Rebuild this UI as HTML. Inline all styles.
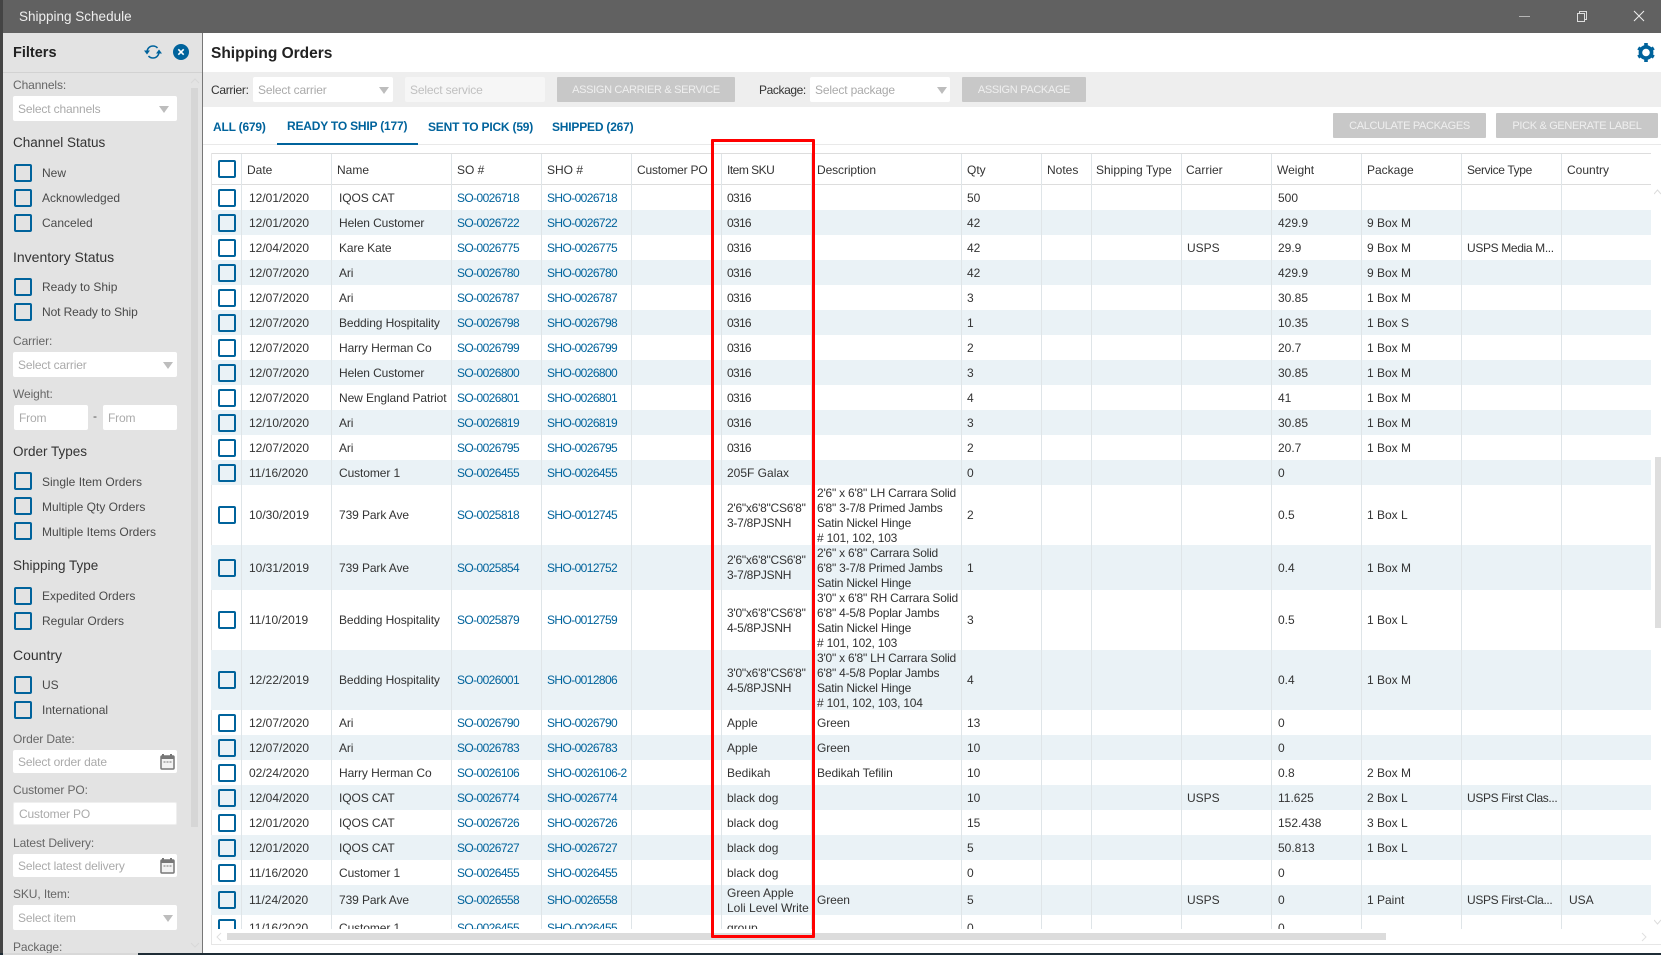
<!DOCTYPE html>
<html><head><meta charset="utf-8"><title>Shipping Schedule</title>
<style>
*{box-sizing:border-box;margin:0;padding:0}
html,body{width:1661px;height:955px;overflow:hidden;background:#fff}
body{position:relative;font-family:"Liberation Sans",sans-serif;font-size:12px;color:#333}
.a{position:absolute;white-space:nowrap}
#title{left:0;top:0;width:1661px;height:33px;background:#616161}
#side{left:0;top:33px;width:203px;height:920px;background:#e3e3e3;border-right:1px solid #777;overflow:hidden}
#edge{left:0;top:0;width:3px;height:953px;background:#444}
.lbl{left:13px;color:#666;font-size:12px;height:16px;line-height:16px;letter-spacing:-.1px}
.hd{left:13px;color:#333;font-size:13.5px;height:18px;line-height:18px}
.ck{left:14px;width:18px;height:18px;border:2px solid #00639c;border-radius:2px}
.cl{left:42px;color:#4a4a4a;font-size:12px;height:18px;line-height:18px}
.inp{background:#fff;border-radius:2px;color:#aaa;font-size:12px;padding-left:5px;display:flex;align-items:center;white-space:nowrap;letter-spacing:-.15px}
.arr{width:0;height:0;border-left:5px solid transparent;border-right:5px solid transparent;border-top:7px solid #bdbdbd}
.btn{background:#c8c8c8;color:#efefef;font-size:11px;letter-spacing:-.33px;border-radius:1px;display:flex;align-items:center;justify-content:center;white-space:nowrap}
.tab{color:#00639c;font-weight:bold;font-size:12px;height:18px;line-height:18px;letter-spacing:-.2px}
.th{top:161px;height:18px;line-height:18px;color:#333;font-size:12px}
.vl{top:154px;width:1px;height:775px;background:#dfe5e8}
#t{left:211px;top:185px;width:1440px;height:744px;overflow:hidden}
.r{position:relative;height:25px}
.r:nth-child(even){background:#eaf2f6}
.r span{position:absolute;top:0;height:100%;padding-top:1px;display:flex;align-items:center;white-space:nowrap;line-height:15px;color:#333;font-size:12px}
.r u{position:absolute;left:7px;top:50%;margin-top:-9px;width:18px;height:18px;border:2px solid #00639c;border-radius:2px;text-decoration:none}
.r .d{left:38px}
.r .n{left:128px;letter-spacing:-.1px}
.r .o{left:246px;color:#00639c;letter-spacing:-.6px}
.r .h{left:336px;color:#00639c;letter-spacing:-.6px}
.r .k{left:516px}
.r:nth-child(-n+11) .k{letter-spacing:-.7px}
.h60 .k,.h45 .k{letter-spacing:-.25px}
.r .e{left:606px;letter-spacing:-.1px}
.h60 .e,.h45 .e{letter-spacing:-.22px}
.r .q{left:756px}
.r .c{left:976px}
.r .w{left:1067px}
.r .p{left:1156px}
.r .v{left:1256px;letter-spacing:-.35px}
.r .y{left:1358px}
.h60{height:60px}.h45{height:45px}.h30{height:30px}
</style></head><body>
<div class="a" id="title"></div>
<div class="a" style="left:19px;top:8px;height:18px;line-height:18px;font-size:13.500px;color:#eee">Shipping Schedule</div>
<div class="a" style="left:1519px;top:16px;width:11px;height:1px;background:#b5b5b5"></div>
<svg class="a" style="left:1574px;top:9px" width="16" height="14" viewBox="0 0 16 14"><path d="M3.500 4.500h7v8h-7zM5.500 4.500V2.500h7v8h-2" fill="none" stroke="#ddd" stroke-width="1"/></svg>
<svg class="a" style="left:1633px;top:10px" width="12" height="12" viewBox="0 0 12 12"><path d="M1 1l10 10M11 1L1 11" stroke="#eee" stroke-width="1" fill="none"/></svg>

<div class="a" id="side"></div>
<div class="a" id="edge"></div>
<div class="a" style="left:3px;top:72px;width:199px;height:1px;background:#d2d2d2"></div>
<div class="a" style="left:13px;top:44px;height:18px;line-height:18px;font-size:14.500px;font-weight:bold;color:#222">Filters</div>
<svg class="a" style="left:143px;top:43px" width="20" height="18" viewBox="0 0 20 18"><path d="M4 8.500C4.500 5 7 3 10 3c2 0 3.500.8 4.500 2M16 9.500c-.5 3.500-3 5.500-6 5.500-2 0-3.500-.8-4.500-2" fill="none" stroke="#00639c" stroke-width="1.500"/><path d="M1 7.500h6L4 11.500zM19 10.500h-6l3-4z" fill="#00639c"/></svg>
<svg class="a" style="left:173px;top:44px" width="16" height="16" viewBox="0 0 16 16"><circle cx="8" cy="8" r="8" fill="#00639c"/><path d="M5.300 5.300l5.400 5.400M10.700 5.300l-5.400 5.400" stroke="#fff" stroke-width="1.600"/></svg>
<div class="a" style="left:191px;top:88px;width:7px;height:739px;background:#d6d6d6"></div>
<svg class="a" style="left:190px;top:78px" width="10" height="6" viewBox="0 0 10 6"><path d="M1 5l4-4 4 4" fill="none" stroke="#d8d8d8"/></svg>
<svg class="a" style="left:190px;top:942px" width="10" height="6" viewBox="0 0 10 6"><path d="M1 1l4 4 4-4" fill="none" stroke="#d8d8d8"/></svg>

<div class="a lbl" style="top:77px">Channels:</div>
<div class="a inp" style="left:13px;top:96px;width:164px;height:25px">Select channels</div>
<div class="a arr" style="left:159px;top:106px"></div>
<div class="a hd" style="top:134px">Channel Status</div>
<div class="a ck" style="top:164px"></div><div class="a cl" style="top:164px">New</div>
<div class="a ck" style="top:189px"></div><div class="a cl" style="top:189px">Acknowledged</div>
<div class="a ck" style="top:214px"></div><div class="a cl" style="top:214px">Canceled</div>
<div class="a hd" style="top:248px;font-size:14px">Inventory Status</div>
<div class="a ck" style="top:278px"></div><div class="a cl" style="top:278px">Ready to Ship</div>
<div class="a ck" style="top:303px"></div><div class="a cl" style="top:303px;letter-spacing:-.1px">Not Ready to Ship</div>
<div class="a lbl" style="top:333px">Carrier:</div>
<div class="a inp" style="left:13px;top:352px;width:164px;height:25px">Select carrier</div>
<div class="a arr" style="left:163px;top:362px"></div>
<div class="a lbl" style="top:386px">Weight:</div>
<div class="a inp" style="left:14px;top:405px;width:74px;height:25px">From</div>
<div class="a" style="left:93px;top:409px;color:#555">-</div>
<div class="a inp" style="left:103px;top:405px;width:74px;height:25px">From</div>
<div class="a hd" style="top:443px">Order Types</div>
<div class="a ck" style="top:472px"></div><div class="a cl" style="top:473px">Single Item Orders</div>
<div class="a ck" style="top:497px"></div><div class="a cl" style="top:498px">Multiple Qty Orders</div>
<div class="a ck" style="top:522px"></div><div class="a cl" style="top:523px">Multiple Items Orders</div>
<div class="a hd" style="top:557px">Shipping Type</div>
<div class="a ck" style="top:587px"></div><div class="a cl" style="top:587px">Expedited Orders</div>
<div class="a ck" style="top:612px"></div><div class="a cl" style="top:612px">Regular Orders</div>
<div class="a hd" style="top:646px;font-size:14px">Country</div>
<div class="a ck" style="top:676px"></div><div class="a cl" style="top:676px">US</div>
<div class="a ck" style="top:701px"></div><div class="a cl" style="top:701px">International</div>
<div class="a lbl" style="top:731px">Order Date:</div>
<div class="a inp" style="left:13px;top:750px;width:164px;height:23px">Select order date</div>
<svg class="a" style="left:160px;top:754px" width="15" height="16" viewBox="0 0 15 16"><path d="M3 0v3M11 0v3" stroke="#777" stroke-width="2"/><rect x="1" y="2" width="13" height="13" rx="1" fill="#f2f2f2" stroke="#777" stroke-width="1.500"/><rect x="1" y="2" width="13" height="3" fill="#777"/><path d="M3.500 8h2M6.500 8h2M9.500 8h2" stroke="#777"/></svg>
<div class="a lbl" style="top:782px">Customer PO:</div>
<div class="a inp" style="left:13px;top:802px;width:164px;height:23px;border:1px solid #efefef">Customer PO</div>
<div class="a lbl" style="top:835px">Latest Delivery:</div>
<div class="a inp" style="left:13px;top:854px;width:164px;height:23px">Select latest delivery</div>
<svg class="a" style="left:160px;top:858px" width="15" height="16" viewBox="0 0 15 16"><path d="M3 0v3M11 0v3" stroke="#777" stroke-width="2"/><rect x="1" y="2" width="13" height="13" rx="1" fill="#f2f2f2" stroke="#777" stroke-width="1.500"/><rect x="1" y="2" width="13" height="3" fill="#777"/><path d="M3.500 8h2M6.500 8h2M9.500 8h2" stroke="#777"/></svg>
<div class="a lbl" style="top:886px">SKU, Item:</div>
<div class="a inp" style="left:13px;top:905px;width:164px;height:25px">Select item</div>
<div class="a arr" style="left:163px;top:915px"></div>
<div class="a lbl" style="top:939px;height:14px;overflow:hidden">Package:</div>

<div class="a" style="left:211px;top:42px;height:24px;line-height:24px;font-size:15.500px;font-weight:bold;color:#222">Shipping Orders</div>
<svg class="a" style="left:1636px;top:42px" width="20" height="20" viewBox="0 0 20 20"><circle cx="10" cy="10.500" r="5.600" fill="none" stroke="#00639c" stroke-width="3.600"/><path d="M10 1v4M10 16v4M2.200 6l3.400 2M14.400 13l3.400 2M2.200 15l3.400-2M14.400 8l3.400-2" stroke="#00639c" stroke-width="3.600" fill="none"/></svg>

<div class="a" style="left:203px;top:72px;width:1458px;height:35px;background:#eee"></div>
<div class="a" style="left:211px;top:81px;height:18px;line-height:18px;color:#333;letter-spacing:-.3px">Carrier:</div>
<div class="a inp" style="left:253px;top:77px;width:140px;height:25px">Select carrier</div>
<div class="a arr" style="left:379px;top:87px"></div>
<div class="a inp" style="left:405px;top:77px;width:140px;height:25px;background:#f6f6f6;color:#c0c0c0">Select service</div>
<div class="a btn" style="left:557px;top:77px;width:178px;height:25px">ASSIGN CARRIER &amp; SERVICE</div>
<div class="a" style="left:759px;top:81px;height:18px;line-height:18px;color:#333;letter-spacing:-.4px">Package:</div>
<div class="a inp" style="left:810px;top:77px;width:140px;height:25px">Select package</div>
<div class="a arr" style="left:937px;top:87px"></div>
<div class="a btn" style="left:962px;top:77px;width:124px;height:25px">ASSIGN PACKAGE</div>

<div class="a tab" style="left:213px;top:118px">ALL (679)</div>
<div class="a tab" style="left:287px;top:117px">READY TO SHIP (177)</div>
<div class="a tab" style="left:428px;top:118px">SENT TO PICK (59)</div>
<div class="a tab" style="left:552px;top:118px">SHIPPED (267)</div>
<div class="a" style="left:203px;top:144px;width:1458px;height:1px;background:#e9e9e9"></div>
<div class="a" style="left:277px;top:143px;width:141px;height:2px;background:#00639c"></div>
<div class="a btn" style="left:1333px;top:113px;width:153px;height:25px">CALCULATE PACKAGES</div>
<div class="a btn" style="left:1496px;top:113px;width:162px;height:25px">PICK &amp; GENERATE LABEL</div>

<div class="a" style="left:211px;top:153px;width:1440px;height:1px;background:#ddd"></div>
<div class="a" style="left:211px;top:184px;width:1440px;height:1px;background:#ddd"></div>
<div class="a" style="left:211px;top:153px;width:1px;height:791px;background:#e6e6e6"></div>
<div class="a" style="left:211px;top:944px;width:1450px;height:1px;background:#e6e6e6"></div>
<div class="a" style="left:218px;top:160px;width:18px;height:18px;border:2px solid #00639c;border-radius:2px"></div>
<div class="a th" style="left:247px">Date</div>
<div class="a th" style="left:337px">Name</div>
<div class="a th" style="left:457px">SO #</div>
<div class="a th" style="left:547px">SHO #</div>
<div class="a th" style="left:637px;letter-spacing:-.2px">Customer PO</div>
<div class="a th" style="left:727px;letter-spacing:-.5px">Item SKU</div>
<div class="a th" style="left:817px;letter-spacing:-.1px">Description</div>
<div class="a th" style="left:967px">Qty</div>
<div class="a th" style="left:1047px">Notes</div>
<div class="a th" style="left:1096px">Shipping Type</div>
<div class="a th" style="left:1186px">Carrier</div>
<div class="a th" style="left:1277px">Weight</div>
<div class="a th" style="left:1367px">Package</div>
<div class="a th" style="left:1467px;letter-spacing:-.35px">Service Type</div>
<div class="a th" style="left:1567px">Country</div>

<div class="a" id="t">
<div class="r"><u></u><span class="d">12/01/2020</span><span class="n">IQOS CAT</span><span class="o">SO-0026718</span><span class="h">SHO-0026718</span><span class="k">0316</span><span class="q">50</span><span class="w">500</span></div>
<div class="r"><u></u><span class="d">12/01/2020</span><span class="n">Helen Customer</span><span class="o">SO-0026722</span><span class="h">SHO-0026722</span><span class="k">0316</span><span class="q">42</span><span class="w">429.9</span><span class="p">9 Box M</span></div>
<div class="r"><u></u><span class="d">12/04/2020</span><span class="n">Kare Kate</span><span class="o">SO-0026775</span><span class="h">SHO-0026775</span><span class="k">0316</span><span class="q">42</span><span class="c">USPS</span><span class="w">29.9</span><span class="p">9 Box M</span><span class="v">USPS Media M...</span></div>
<div class="r"><u></u><span class="d">12/07/2020</span><span class="n">Ari</span><span class="o">SO-0026780</span><span class="h">SHO-0026780</span><span class="k">0316</span><span class="q">42</span><span class="w">429.9</span><span class="p">9 Box M</span></div>
<div class="r"><u></u><span class="d">12/07/2020</span><span class="n">Ari</span><span class="o">SO-0026787</span><span class="h">SHO-0026787</span><span class="k">0316</span><span class="q">3</span><span class="w">30.85</span><span class="p">1 Box M</span></div>
<div class="r"><u></u><span class="d">12/07/2020</span><span class="n">Bedding Hospitality</span><span class="o">SO-0026798</span><span class="h">SHO-0026798</span><span class="k">0316</span><span class="q">1</span><span class="w">10.35</span><span class="p">1 Box S</span></div>
<div class="r"><u></u><span class="d">12/07/2020</span><span class="n">Harry Herman Co</span><span class="o">SO-0026799</span><span class="h">SHO-0026799</span><span class="k">0316</span><span class="q">2</span><span class="w">20.7</span><span class="p">1 Box M</span></div>
<div class="r"><u></u><span class="d">12/07/2020</span><span class="n">Helen Customer</span><span class="o">SO-0026800</span><span class="h">SHO-0026800</span><span class="k">0316</span><span class="q">3</span><span class="w">30.85</span><span class="p">1 Box M</span></div>
<div class="r"><u></u><span class="d">12/07/2020</span><span class="n">New England Patriot</span><span class="o">SO-0026801</span><span class="h">SHO-0026801</span><span class="k">0316</span><span class="q">4</span><span class="w">41</span><span class="p">1 Box M</span></div>
<div class="r"><u></u><span class="d">12/10/2020</span><span class="n">Ari</span><span class="o">SO-0026819</span><span class="h">SHO-0026819</span><span class="k">0316</span><span class="q">3</span><span class="w">30.85</span><span class="p">1 Box M</span></div>
<div class="r"><u></u><span class="d">12/07/2020</span><span class="n">Ari</span><span class="o">SO-0026795</span><span class="h">SHO-0026795</span><span class="k">0316</span><span class="q">2</span><span class="w">20.7</span><span class="p">1 Box M</span></div>
<div class="r"><u></u><span class="d">11/16/2020</span><span class="n">Customer 1</span><span class="o">SO-0026455</span><span class="h">SHO-0026455</span><span class="k">205F Galax</span><span class="q">0</span><span class="w">0</span></div>
<div class="r h60"><u></u><span class="d">10/30/2019</span><span class="n">739 Park Ave</span><span class="o">SO-0025818</span><span class="h">SHO-0012745</span><span class="k">2'6"x6'8"CS6'8"<br>3-7/8PJSNH</span><span class="e">2'6" x 6'8" LH Carrara Solid<br>6'8" 3-7/8 Primed Jambs<br>Satin Nickel Hinge<br># 101, 102, 103</span><span class="q">2</span><span class="w">0.5</span><span class="p">1 Box L</span></div>
<div class="r h45"><u></u><span class="d">10/31/2019</span><span class="n">739 Park Ave</span><span class="o">SO-0025854</span><span class="h">SHO-0012752</span><span class="k">2'6"x6'8"CS6'8"<br>3-7/8PJSNH</span><span class="e">2'6" x 6'8" Carrara Solid<br>6'8" 3-7/8 Primed Jambs<br>Satin Nickel Hinge</span><span class="q">1</span><span class="w">0.4</span><span class="p">1 Box M</span></div>
<div class="r h60"><u></u><span class="d">11/10/2019</span><span class="n">Bedding Hospitality</span><span class="o">SO-0025879</span><span class="h">SHO-0012759</span><span class="k">3'0"x6'8"CS6'8"<br>4-5/8PJSNH</span><span class="e">3'0" x 6'8" RH Carrara Solid<br>6'8" 4-5/8 Poplar Jambs<br>Satin Nickel Hinge<br># 101, 102, 103</span><span class="q">3</span><span class="w">0.5</span><span class="p">1 Box L</span></div>
<div class="r h60"><u></u><span class="d">12/22/2019</span><span class="n">Bedding Hospitality</span><span class="o">SO-0026001</span><span class="h">SHO-0012806</span><span class="k">3'0"x6'8"CS6'8"<br>4-5/8PJSNH</span><span class="e">3'0" x 6'8" LH Carrara Solid<br>6'8" 4-5/8 Poplar Jambs<br>Satin Nickel Hinge<br># 101, 102, 103, 104</span><span class="q">4</span><span class="w">0.4</span><span class="p">1 Box M</span></div>
<div class="r"><u></u><span class="d">12/07/2020</span><span class="n">Ari</span><span class="o">SO-0026790</span><span class="h">SHO-0026790</span><span class="k">Apple</span><span class="e">Green</span><span class="q">13</span><span class="w">0</span></div>
<div class="r"><u></u><span class="d">12/07/2020</span><span class="n">Ari</span><span class="o">SO-0026783</span><span class="h">SHO-0026783</span><span class="k">Apple</span><span class="e">Green</span><span class="q">10</span><span class="w">0</span></div>
<div class="r"><u></u><span class="d">02/24/2020</span><span class="n">Harry Herman Co</span><span class="o">SO-0026106</span><span class="h">SHO-0026106-2</span><span class="k">Bedikah</span><span class="e">Bedikah Tefilin</span><span class="q">10</span><span class="w">0.8</span><span class="p">2 Box M</span></div>
<div class="r"><u></u><span class="d">12/04/2020</span><span class="n">IQOS CAT</span><span class="o">SO-0026774</span><span class="h">SHO-0026774</span><span class="k">black dog</span><span class="q">10</span><span class="c">USPS</span><span class="w">11.625</span><span class="p">2 Box L</span><span class="v">USPS First Clas...</span></div>
<div class="r"><u></u><span class="d">12/01/2020</span><span class="n">IQOS CAT</span><span class="o">SO-0026726</span><span class="h">SHO-0026726</span><span class="k">black dog</span><span class="q">15</span><span class="w">152.438</span><span class="p">3 Box L</span></div>
<div class="r"><u></u><span class="d">12/01/2020</span><span class="n">IQOS CAT</span><span class="o">SO-0026727</span><span class="h">SHO-0026727</span><span class="k">black dog</span><span class="q">5</span><span class="w">50.813</span><span class="p">1 Box L</span></div>
<div class="r"><u></u><span class="d">11/16/2020</span><span class="n">Customer 1</span><span class="o">SO-0026455</span><span class="h">SHO-0026455</span><span class="k">black dog</span><span class="q">0</span><span class="w">0</span></div>
<div class="r h30"><u></u><span class="d">11/24/2020</span><span class="n">739 Park Ave</span><span class="o">SO-0026558</span><span class="h">SHO-0026558</span><span class="k">Green Apple<br>Loli Level Write</span><span class="e">Green</span><span class="q">5</span><span class="c">USPS</span><span class="w">0</span><span class="p">1 Paint</span><span class="v">USPS First-Cla...</span><span class="y">USA</span></div>
<div class="r"><u></u><span class="d">11/16/2020</span><span class="n">Customer 1</span><span class="o">SO-0026455</span><span class="h">SHO-0026455</span><span class="k">group</span><span class="q">0</span><span class="w">0</span></div>
</div>

<div class="a vl" style="left:241px"></div><div class="a vl" style="left:331px"></div><div class="a vl" style="left:451px"></div><div class="a vl" style="left:541px"></div><div class="a vl" style="left:631px"></div><div class="a vl" style="left:721px"></div><div class="a vl" style="left:811px"></div><div class="a vl" style="left:961px"></div><div class="a vl" style="left:1041px"></div><div class="a vl" style="left:1091px"></div><div class="a vl" style="left:1181px"></div><div class="a vl" style="left:1271px"></div><div class="a vl" style="left:1361px"></div><div class="a vl" style="left:1461px"></div><div class="a vl" style="left:1561px"></div>

<div class="a" style="left:227px;top:933px;width:1159px;height:7px;background:#dcdcdc"></div>
<svg class="a" style="left:216px;top:932px" width="6" height="10" viewBox="0 0 6 10"><path d="M5 1L1 5l4 4" fill="none" stroke="#e0e0e0"/></svg>
<svg class="a" style="left:1641px;top:932px" width="6" height="10" viewBox="0 0 6 10"><path d="M1 1l4 4-4 4" fill="none" stroke="#e0e0e0"/></svg>
<div class="a" style="left:1655px;top:457px;width:6px;height:171px;background:#dedede"></div>
<svg class="a" style="left:1654px;top:189px" width="7" height="6" viewBox="0 0 7 6"><path d="M0 5l3.500-4 3.500 4" fill="none" stroke="#dcdcdc"/></svg>
<svg class="a" style="left:1654px;top:919px" width="7" height="6" viewBox="0 0 7 6"><path d="M0 1l3.500 4 3.500-4" fill="none" stroke="#dcdcdc"/></svg>

<div class="a" style="left:711px;top:139px;width:104px;height:799px;border:3px solid #f00;border-radius:1px"></div>

<div class="a" style="left:0;top:953px;width:1661px;height:2px;background:#1f2d36"></div>
<div class="a" style="left:3px;top:953px;width:135px;height:2px;background:#d8d8d8"></div>
</body></html>
